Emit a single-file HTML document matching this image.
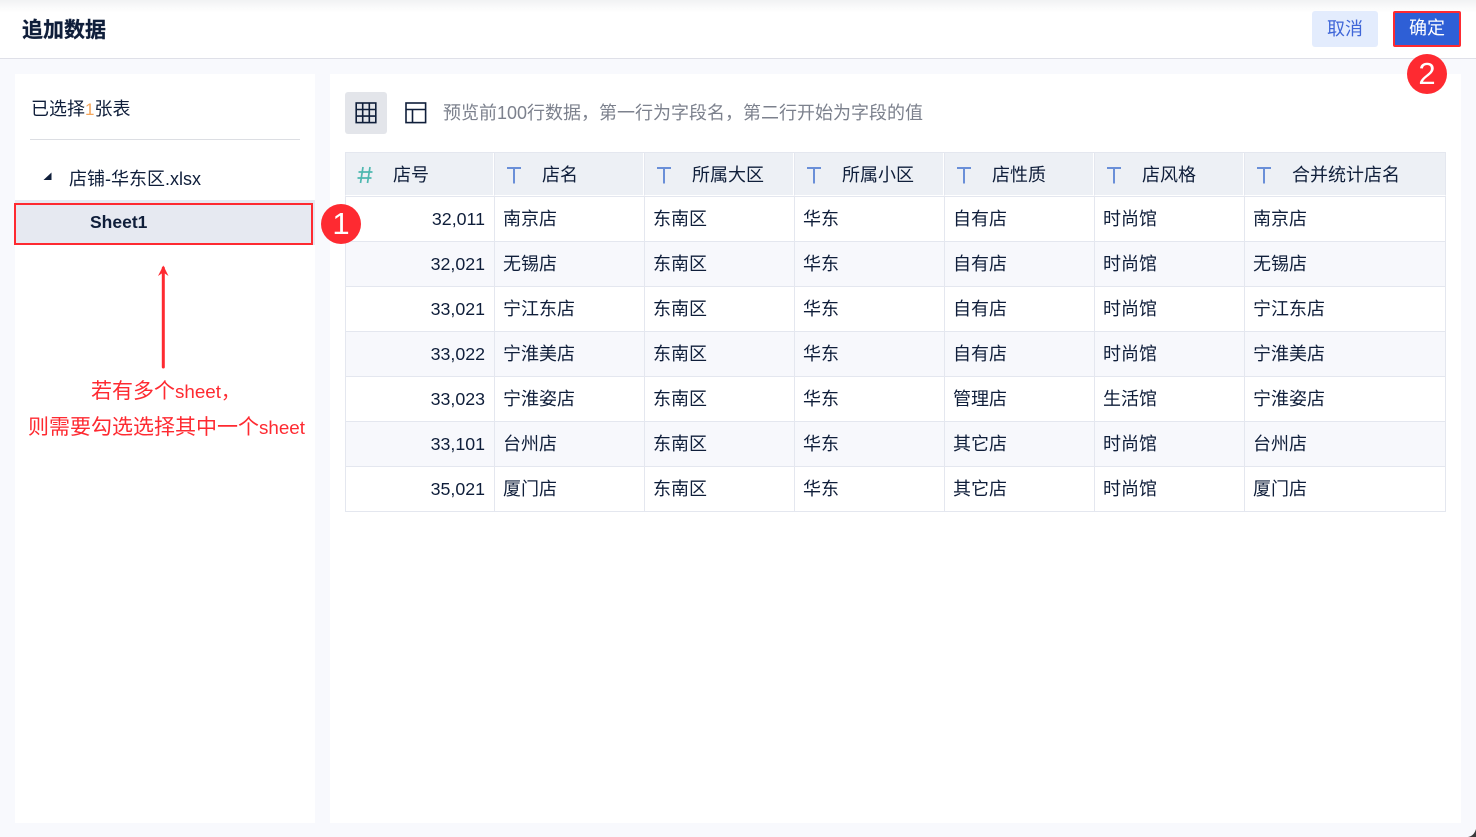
<!DOCTYPE html>
<html lang="zh-CN">
<head>
<meta charset="utf-8">
<title>追加数据</title>
<style>
html,body{margin:0;padding:0;}
body{width:1476px;height:837px;position:relative;overflow:hidden;background:#f8f9fd;font-family:"Liberation Sans","Noto Sans CJK SC",sans-serif;font-size:18px;color:#0f1e3a;}
.a{position:absolute;white-space:nowrap;}
#hd{left:0;top:0;width:1476px;height:58px;background:linear-gradient(#f1f2f3 0,#fbfbfb 8px,#fff 13px);border-bottom:1px solid #dfe0e8;}
#tbl{position:absolute;left:345px;top:152px;width:1101px;border-collapse:separate;border-spacing:0;table-layout:fixed;}
#tbl th{height:42px;padding:0;background:#edf0f5;border-top:1px solid #e4e7ef;border-right:1px solid #e4e7ef;border-bottom:1px solid #fff;font-weight:400;text-align:left;position:relative;line-height:42px;box-shadow:inset -1px 0 0 #fff;}
#tbl th:last-child{box-shadow:none;}
#tbl th:first-child{border-left:1px solid #e4e7ef;}
#tbl th span{position:absolute;left:47px;top:1px;}
#tbl th:first-child span{left:47px;}
#tbl th svg{position:absolute;left:11px;top:13px;}
#tbl td{height:44px;padding:0 8px 0 8px;border-right:1px solid #e4e7ef;border-bottom:1px solid #e4e7ef;line-height:44px;overflow:hidden;white-space:nowrap;}
#tbl td:first-child{border-left:1px solid #e4e7ef;text-align:right;font-size:17.8px;padding-right:9px;}
#tbl tr.f td{height:44px;border-top:1px solid #e4e7ef;}
#tbl tr.o td{background:#f7f8fc;}
.c{width:40px;height:40px;border-radius:50%;background:#fe2a31;color:#fff;font-size:31px;line-height:40px;text-align:center;}
</style>
</head>
<body>
<div class="a" id="hd"></div>
<div class="a" style="left:22px;top:16px;font-size:21px;line-height:30px;font-weight:700;color:#0f1e3a;-webkit-text-stroke:.3px #0f1e3a;">追加数据</div>
<div class="a" style="left:1312px;top:11px;width:66px;height:36px;background:#e3ecfd;border-radius:3px;color:#3f66d8;text-align:center;line-height:36px;">取消</div>
<div class="a" style="left:1393px;top:11px;width:64px;height:32px;background:#2e5fd6;border:2px solid #fe2a31;border-radius:2px;color:#fff;text-align:center;line-height:30px;">确定</div>

<div class="a" style="left:15px;top:74px;width:300px;height:749px;background:#fff;"></div>
<div class="a" style="left:330px;top:74px;width:1131px;height:749px;background:#fff;"></div>

<div class="a" style="left:31px;top:96px;line-height:26px;">已选择<span style="color:#f5a55a;font-size:17px;">1</span>张表</div>
<div class="a" style="left:30px;top:139px;width:270px;height:1px;background:#dcdee3;"></div>
<svg class="a" style="left:43px;top:172px;" width="10" height="9" viewBox="0 0 10 9"><path d="M8.5 0.5V8H0.5Z" fill="#0f1e3a"/></svg>
<div class="a" style="left:69px;top:166px;line-height:26px;">店铺-华东区.xlsx</div>
<div class="a" style="left:15px;top:200px;width:300px;height:45px;background:#e6e9f1;"></div>
<div class="a" style="left:14px;top:203px;width:295px;height:38px;border:2px solid #fe2a31;"></div>
<div class="a" style="left:90px;top:209px;line-height:26px;font-size:17.5px;font-weight:700;">Sheet1</div>

<svg class="a" style="left:153px;top:262px;" width="20" height="110" viewBox="0 0 20 110"><path d="M10.3 105V6" stroke="#fe2a31" stroke-width="3" stroke-linecap="round" fill="none"/><path d="M10.3 3.5L15.5 14L10.3 10.5L5 14Z" fill="#fe2a31"/></svg>
<div class="a" style="left:91px;top:377px;line-height:30px;color:#fe2a31;font-size:21px;">若有多个<span style="font-size:18.8px;">sheet，</span></div>
<div class="a" style="left:28px;top:413px;line-height:30px;color:#fe2a31;font-size:21px;">则需要勾选选择其中一个<span style="font-size:18.8px;">sheet</span></div>

<div class="a" style="left:345px;top:92px;width:42px;height:42px;background:#e3e5ea;border-radius:3px;"></div>
<svg class="a" style="left:355px;top:102px;" width="22" height="22" viewBox="0 0 22 22" fill="none" stroke="#0f1e3a" stroke-width="1.6"><rect x="1.2" y="1" width="19.6" height="19.6"/><path d="M7.7 1V20.6M14.3 1V20.6M1.2 7.5H20.8M1.2 14.1H20.8"/></svg>
<svg class="a" style="left:405px;top:102px;" width="22" height="22" viewBox="0 0 22 22" fill="none" stroke="#0f1e3a" stroke-width="1.6"><rect x="1" y="1" width="19.6" height="19.6"/><path d="M1 7.5H20.6M7.5 7.5V20.6"/></svg>
<div class="a" style="left:443px;top:100px;line-height:26px;color:#7c818d;">预览前100行数据，第一行为字段名，第二行开始为字段的值</div>

<table id="tbl">
<colgroup><col style="width:150px"><col style="width:150px"><col style="width:150px"><col style="width:150px"><col style="width:150px"><col style="width:150px"><col style="width:201px"></colgroup>
<thead><tr>
<th><svg width="16" height="18" viewBox="0 0 16 18" fill="none" stroke="#4db8b0" stroke-width="1.7"><path d="M6 1L3.5 17M13 1L10.5 17M1.5 6H15.5M0.5 12H14.5"/></svg><span>店号</span></th>
<th><svg width="16" height="18" viewBox="0 0 16 18" fill="none" stroke="#6a8fd8" stroke-width="2"><path d="M1 2H15M8 2V17.5"/></svg><span>店名</span></th>
<th><svg width="16" height="18" viewBox="0 0 16 18" fill="none" stroke="#6a8fd8" stroke-width="2"><path d="M1 2H15M8 2V17.5"/></svg><span>所属大区</span></th>
<th><svg width="16" height="18" viewBox="0 0 16 18" fill="none" stroke="#6a8fd8" stroke-width="2"><path d="M1 2H15M8 2V17.5"/></svg><span>所属小区</span></th>
<th><svg width="16" height="18" viewBox="0 0 16 18" fill="none" stroke="#6a8fd8" stroke-width="2"><path d="M1 2H15M8 2V17.5"/></svg><span>店性质</span></th>
<th><svg width="16" height="18" viewBox="0 0 16 18" fill="none" stroke="#6a8fd8" stroke-width="2"><path d="M1 2H15M8 2V17.5"/></svg><span>店风格</span></th>
<th><svg width="16" height="18" viewBox="0 0 16 18" fill="none" stroke="#6a8fd8" stroke-width="2"><path d="M1 2H15M8 2V17.5"/></svg><span>合并统计店名</span></th>
</tr></thead>
<tbody>
<tr class="f"><td>32,011</td><td>南京店</td><td>东南区</td><td>华东</td><td>自有店</td><td>时尚馆</td><td>南京店</td></tr>
<tr class="o"><td>32,021</td><td>无锡店</td><td>东南区</td><td>华东</td><td>自有店</td><td>时尚馆</td><td>无锡店</td></tr>
<tr><td>33,021</td><td>宁江东店</td><td>东南区</td><td>华东</td><td>自有店</td><td>时尚馆</td><td>宁江东店</td></tr>
<tr class="o"><td>33,022</td><td>宁淮美店</td><td>东南区</td><td>华东</td><td>自有店</td><td>时尚馆</td><td>宁淮美店</td></tr>
<tr><td>33,023</td><td>宁淮姿店</td><td>东南区</td><td>华东</td><td>管理店</td><td>生活馆</td><td>宁淮姿店</td></tr>
<tr class="o"><td>33,101</td><td>台州店</td><td>东南区</td><td>华东</td><td>其它店</td><td>时尚馆</td><td>台州店</td></tr>
<tr><td>35,021</td><td>厦门店</td><td>东南区</td><td>华东</td><td>其它店</td><td>时尚馆</td><td>厦门店</td></tr>
</tbody>
</table>

<div class="a c" style="left:1407px;top:54px;">2</div>
<div class="a c" style="left:321px;top:204px;">1</div>

<svg class="a" style="left:1468px;top:829px;" width="8" height="8" viewBox="0 0 8 8"><path d="M8 0V8H0Q6 7 8 0Z" fill="#3a3a3c"/></svg>
</body>
</html>
